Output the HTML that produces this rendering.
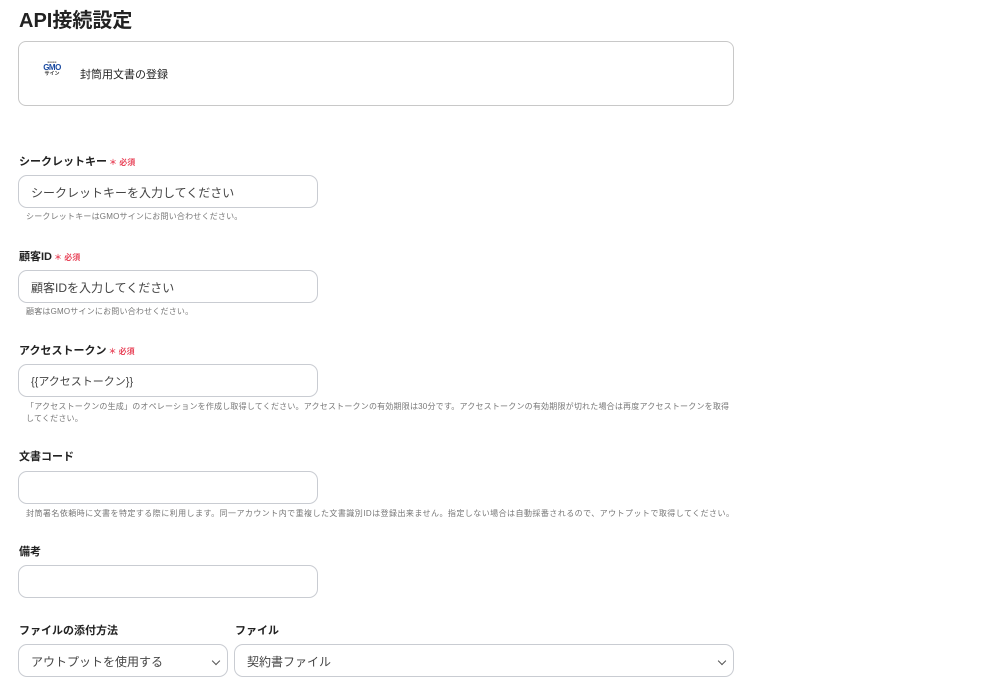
<!DOCTYPE html>
<html><head><meta charset="utf-8"><style>
*{box-sizing:border-box;margin:0;padding:0}
body{width:996px;height:691px;background:#fff;font-family:"Liberation Sans","Noto Sans CJK JP",sans-serif;color:#222;position:relative;overflow:hidden}
.a{position:absolute;white-space:nowrap}
h1{position:absolute;left:19px;top:4px;font-size:20px;font-weight:bold;color:#222}
.card{position:absolute;left:18px;top:41px;width:716px;height:65px;border:1px solid #c8c8c8;border-radius:8px}
.lbl{position:absolute;left:19px;font-size:11px;font-weight:bold;color:#222}
.req{color:#e8455a;font-size:8px;font-weight:bold;margin-left:2px}
.in{position:absolute;left:18px;width:300px;height:33px;border:1px solid #c9ccd2;border-radius:9px;font-size:12px;color:#444;padding:8px 12px}
.h{position:absolute;left:26px;font-size:8px;color:#777;line-height:12px;letter-spacing:0.2px}
.chev{position:absolute;right:8px;top:13px;width:6px;height:6px;border-right:1px solid #555;border-bottom:1px solid #555;transform:rotate(45deg)}
</style></head><body>
<h1>API接続設定</h1>
<div class="card">
<div class="a" style="left:20px;top:19px;width:26px;text-align:center;line-height:1">
<div style="font-size:3px;color:#888">■■■■■</div>
<div style="font-size:8px;font-weight:bold;color:#1a4aa0;letter-spacing:-0.5px">GMO</div>
<div style="font-size:5px;font-weight:bold;color:#333">サイン</div></div>
<div class="a" style="left:61px;top:24px;font-size:11px">封筒用文書の登録</div>
</div>

<div class="lbl" style="top:153px">シークレットキー<span class="req">＊ 必須</span></div>
<div class="in" style="top:175px">シークレットキーを入力してください</div>
<div class="h" style="top:211px">シークレットキーはGMOサインにお問い合わせください。</div>

<div class="lbl" style="top:248px">顧客ID<span class="req">＊ 必須</span></div>
<div class="in" style="top:270px">顧客IDを入力してください</div>
<div class="h" style="top:306px">顧客はGMOサインにお問い合わせください。</div>

<div class="lbl" style="top:342px">アクセストークン<span class="req">＊ 必須</span></div>
<div class="in" style="top:364px;font-size:11px">{{アクセストークン}}</div>
<div class="h" style="top:401px;white-space:normal;width:705px">「アクセストークンの生成」のオペレーションを作成し取得してください。アクセストークンの有効期限は30分です。アクセストークンの有効期限が切れた場合は再度アクセストークンを取得してください。</div>

<div class="lbl" style="top:448px">文書コード</div>
<div class="in" style="top:471px"></div>
<div class="h" style="top:508px;letter-spacing:0.45px">封筒署名依頼時に文書を特定する際に利用します。同一アカウント内で重複した文書識別IDは登録出来ません。指定しない場合は自動採番されるので、アウトプットで取得してください。</div>

<div class="lbl" style="top:543px">備考</div>
<div class="in" style="top:565px"></div>

<div class="lbl" style="top:622px">ファイルの添付方法</div>
<div class="lbl" style="top:622px;left:235px">ファイル</div>
<div class="in" style="top:644px;width:210px">アウトプットを使用する<span class="chev"></span></div>
<div class="in" style="top:644px;left:234px;width:500px">契約書ファイル<span class="chev"></span></div>
</body></html>
